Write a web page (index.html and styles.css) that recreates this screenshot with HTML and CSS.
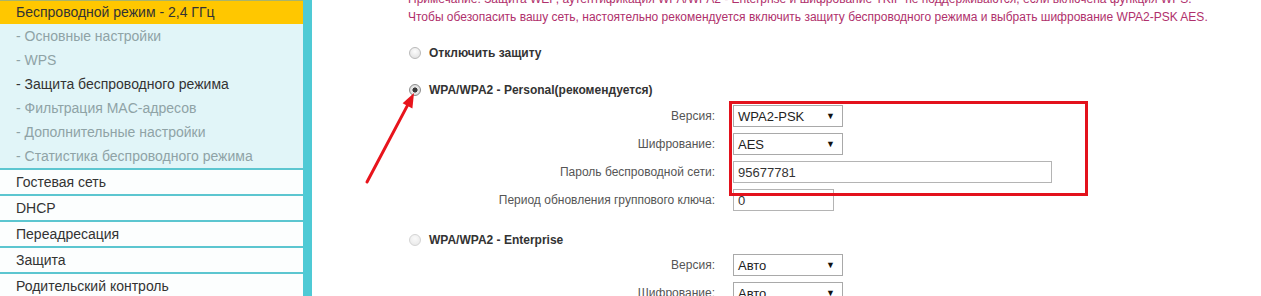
FILE: index.html
```html
<!DOCTYPE html>
<html lang="ru">
<head>
<meta charset="utf-8">
<title>Защита беспроводного режима</title>
<link rel="stylesheet" href="styles.css">
</head>
<body>
<div class="layout">
  <nav class="sidebar">
    <div class="nav-item active">Беспроводной режим - 2,4 ГГц</div>
    <ul class="submenu">
      <li>- Основные настройки</li>
      <li>- WPS</li>
      <li class="current">- Защита беспроводного режима</li>
      <li>- Фильтрация MAC-адресов</li>
      <li>- Дополнительные настройки</li>
      <li>- Статистика беспроводного режима</li>
    </ul>
    <div class="nav-item">Гостевая сеть</div>
    <div class="nav-item">DHCP</div>
    <div class="nav-item">Переадресация</div>
    <div class="nav-item">Защита</div>
    <div class="nav-item">Родительский контроль</div>
  </nav>

  <main class="content">
    <p class="notice">Примечание: Защита WEP, аутентификация WPA/WPA2 - Enterprise и шифрование TKIP не поддерживаются, если включена функция WPS.<br>Чтобы обезопасить вашу сеть, настоятельно рекомендуется включить защиту беспроводного режима и выбрать шифрование WPA2-PSK AES.</p>

    <div class="option opt-off">
      <input type="radio" name="sec" class="radio">
      <label>Отключить защиту</label>
    </div>

    <div class="option opt-personal">
      <input type="radio" name="sec" class="radio" checked>
      <label>WPA/WPA2 - Personal(рекомендуется)</label>
    </div>

    <div class="form form-personal">
      <div class="highlight">
        <div class="row">
          <span class="label">Версия:</span>
          <span class="select sel-short"><span>WPA2-PSK</span></span>
        </div>
        <div class="row">
          <span class="label">Шифрование:</span>
          <span class="select sel-short"><span>AES</span></span>
        </div>
        <div class="row">
          <span class="label">Пароль беспроводной сети:</span>
          <span class="input input-long">95677781</span>
        </div>
      </div>
      <div class="row">
        <span class="label">Период обновления группового ключа:</span>
        <span class="input input-short">0</span>
      </div>
    </div>

    <div class="option opt-enterprise">
      <input type="radio" name="sec" class="radio radio-disabled">
      <label>WPA/WPA2 - Enterprise</label>
    </div>

    <div class="form form-enterprise">
      <div class="row">
        <span class="label">Версия:</span>
        <span class="select sel-short"><span>Авто</span></span>
      </div>
      <div class="row">
        <span class="label">Шифрование:</span>
        <span class="select sel-short"><span>Авто</span></span>
      </div>
    </div>
  </main>

  <svg class="arrow" width="60" height="105" viewBox="0 0 60 105">
    <line x1="7" y1="97" x2="47.5" y2="20.4" stroke="#e8141c" stroke-width="3" stroke-linecap="round"/>
    <polygon points="54,8 52.4,23.5 42.6,18.3" fill="#e8141c"/>
  </svg>
</div>
</body>
</html>
```

FILE: styles.css
```css
* { box-sizing: border-box; }

html, body {
  margin: 0;
  padding: 0;
  background: #fff;
  overflow: hidden;
}

body {
  font-family: "Liberation Sans", Arial, sans-serif;
  color: #333;
}

.layout {
  position: relative;
  display: flex;
  width: 1261px;
  height: 296px;
  overflow: hidden;
}

/* ---------- sidebar ---------- */
.sidebar {
  width: 312px;
  flex: none;
  border-right: 9px solid #4fcad5;
  font-size: 14px;
  background: #fff;
}

.nav-item {
  height: 26px;
  line-height: 25px;
  padding-left: 16px;
  border-top: 2px solid #5cc6d0;
  background: #fcfefe;
  color: #333;
}

.nav-item.active {
  height: 24px;
  line-height: 23px;
  border-top: 1px solid #a9b46a;
  background: #ffc700;
  color: #333;
}

.submenu {
  list-style: none;
  margin: 0;
  padding: 0;
  background: #e1f5f8;
}

.submenu li {
  height: 24px;
  line-height: 25px;
  padding-left: 16px;
  color: #8fa3a6;
}

.submenu li.current {
  color: #333;
}

/* ---------- content ---------- */
.content {
  flex: 1;
  padding-left: 96px;
}

.notice {
  margin: -10px 0 0;
  font-size: 12px;
  line-height: 18px;
  color: #b0306c;
  white-space: nowrap;
}

.option {
  display: flex;
  align-items: center;
  height: 20px;
  gap: 8px;
  font-size: 12px;
  font-weight: bold;
  color: #333;
}

.opt-off { margin-top: 17px; }
.opt-personal { margin-top: 17px; }
.opt-enterprise { margin-top: 16px; }

.radio {
  -webkit-appearance: none;
  appearance: none;
  margin: 0 0 0 1px;
  width: 12px;
  height: 12px;
  border-radius: 50%;
  border: 1px solid #b9b9b9;
  background: radial-gradient(circle at 50% 35%, #fdfdfd, #dcdcdc);
  position: relative;
}

.radio:checked {
  border-color: #8d8d8d;
  background: radial-gradient(circle, #3a3a3a 0 2.3px, #e9e9e9 2.8px, #d2d2d2 100%);
}

.radio-disabled {
  border-color: #d4d4d4;
  background: radial-gradient(circle at 50% 35%, #fafafa, #e6e6e6);
}

.form-personal { margin-top: 2px; }
.form-enterprise { margin-top: 1px; }

.highlight {
  position: relative;
}

.highlight::after {
  content: "";
  position: absolute;
  top: -1px;
  left: 321px;
  width: 353px;
  height: 89px;
  border: 3px solid #e3121c;
  pointer-events: none;
}

.row {
  display: grid;
  grid-template-columns: 307px auto;
  column-gap: 18px;
  align-items: center;
  justify-items: start;
  height: 28px;
}

.label {
  justify-self: end;
  font-size: 12px;
  color: #555;
}

.select,
.input {
  display: flex;
  align-items: center;
  height: 22px;
  border: 1px solid #a9a9a9;
  background: #fff;
  font-size: 13px;
  color: #222;
  padding-left: 4px;
}

.select {
  position: relative;
  width: 110px;
}

.select::after {
  content: "\25BC";
  position: absolute;
  right: 7px;
  top: 5px;
  font-size: 9px;
  color: #111;
}

.input { color: #333; }
.input-long { width: 319px; border-color: #b4b4b4; }
.input-short { width: 101px; border-color: #b4b4b4; }

/* annotation arrow */
.arrow {
  position: absolute;
  left: 360px;
  top: 85px;
}
```
